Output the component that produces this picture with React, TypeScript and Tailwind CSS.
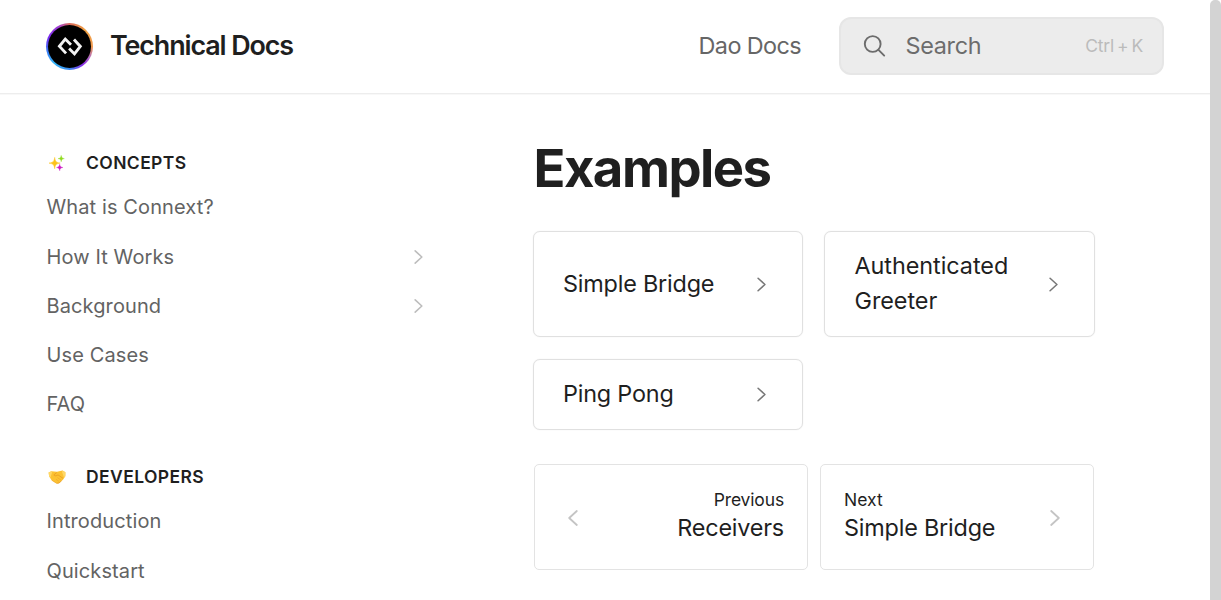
import React from "react";

function Chevron({ className, left = false, w = 1.5 }: { className?: string; left?: boolean; w?: number }) {
  return (
    <svg viewBox="0 0 10 16" fill="none" stroke="currentColor" strokeWidth={w} strokeLinecap="round" strokeLinejoin="round" className={className}>
      <path d={left ? "M8.8 1 1.2 8l7.6 7" : "M1.2 1l7.6 7-7.6 7"} />
    </svg>
  );
}

function Logo() {
  return (
    <div className="mt-px size-[47px] shrink-0 rounded-full bg-[conic-gradient(from_0deg,#d96a5c,#f0a040_12%,#f09a50_25%,#b06ac0_33%,#8a2be8_40%,#3a8af0_50%,#35b5f5_62%,#3a78f5_72%,#7a28f0_82%,#a040d0_92%,#d96a5c)] p-[1.7px]">
      <svg viewBox="0 0 44 44" className="size-full rounded-full bg-black" fill="none" stroke="#f2f2f2" strokeWidth="2.9" strokeLinejoin="miter">
        <path d="M23.2 20 17.4 14.2 11.5 21.4 18.2 28.6" />
        <path d="M26.2 14.6 32.6 21.6 26.7 29.2 21.3 23.8" />
      </svg>
    </div>
  );
}

function Sparkles() {
  return (
    <svg viewBox="0 0 18 18" className="-mt-px size-[18px]">
      <path d="M6.7 3.4C7.3 7.5 8.2 8.4 12.2 9.1 8.2 9.8 7.3 10.7 6.7 14.7 6.1 10.7 5.1 9.8 1 9.1 5.1 8.4 6.1 7.5 6.7 3.4Z" fill="#fcc21b" stroke="#fcc21b" strokeWidth=".5" />
      <path d="M13.2 1.4c.4 2.2.9 2.8 3.1 3.2-2.2.4-2.7.9-3.1 3.1-.4-2.2-.9-2.7-3.1-3.1 2.2-.4 2.7-1 3.1-3.2Z" fill="#8edb1c" stroke="#8edb1c" strokeWidth=".4" />
      <path d="M11.7 10.3c.4 2.2.9 2.8 3.2 3.2-2.3.4-2.8.9-3.2 3.2-.4-2.3-.9-2.8-3.1-3.2 2.2-.4 2.7-1 3.1-3.2Z" fill="#cc1fc4" stroke="#cc1fc4" strokeWidth=".4" />
    </svg>
  );
}

function Handshake() {
  return (
    <svg viewBox="0 0 18 18" className="size-[18px]">
      <path d="M.6 4.4 3.4 3.2 9 3.8 14.5 2.6 17.4 4.2 17.3 8.3 15 11.8 13.4 13 11 15.2 8.6 15.5 3.8 12.4 1.2 8.6Z" fill="#fcc233" />
      <path d="M.6 4.4 3.4 3.2 4.2 4 2.4 9.8 1.2 8.6ZM14.5 2.6 17.4 4.2 17.3 8.3 16 9.6 14 4Z" fill="#ffd766" />
      <path d="M8.8 4.6 5.8 6.9c1 1.4 2.7 1 4.2 0l5 3.4M8.6 15.3 11 15l2.6-2.2" fill="none" stroke="#e79a25" strokeWidth=".8" />
      <path d="M3.8 12.2l4.6 3M9.4 9.6l3.5 2.4M8 11.3l3.2 2.2" fill="none" stroke="#eda52c" strokeWidth=".6" />
    </svg>
  );
}

function Section({ icon, title }: { icon: React.ReactNode; title: string }) {
  return (
    <h2 className="flex h-6 items-center gap-5 pl-[1.5px] text-[17.5px] font-semibold tracking-[0.4px] text-[#1f1f1f]">
      {icon}
      <span>{title}</span>
    </h2>
  );
}

function NavItem({ label, expandable = false }: { label: string; expandable?: boolean }) {
  return (
    <a className="flex h-[49.2px] items-center justify-between text-[20px] tracking-[0.11px] text-[#636363]">
      <span>{label}</span>
      {expandable && <Chevron className="h-[14px] w-[9px] text-[#bdbdbd]" w={1.8} />}
    </a>
  );
}

function Card({ label, className }: { label: string; className: string }) {
  return (
    <a className={`flex items-center justify-between rounded-[7px] border border-[#e0e0e0] pr-[36px] text-[23.4px] leading-[35px] shadow-[0_0_1px_#dcdcdc] ${className}`}>
      <span>{label}</span>
      <Chevron className="mt-[2px] h-[15px] w-[9px] shrink-0 text-[#777]" w={1.7} />
    </a>
  );
}

export default function App() {
  return (
    <div className="flex h-[600px] w-[1221px] overflow-hidden bg-white font-[Inter,sans-serif] text-[#1f1f1f]">
      <div className="flex w-[1210px] shrink-0 flex-col">
        <header className="flex h-[94px] shrink-0 items-center border-b border-[#ededed] pr-[46px] pb-px pl-[46px] shadow-[0_1px_0_#f8f8f8]">
          <Logo />
          <span className="-mt-[3px] ml-[17px] text-[26.9px] leading-8 font-semibold tracking-[-1.12px]">Technical Docs</span>
          <span className="-mt-px ml-auto text-[23.4px] tracking-[-0.6px] text-[#666]">Dao Docs</span>
          <div className="ml-[38px] flex h-[58px] w-[325px] items-center rounded-[12px] border-2 border-[#e6e6e6] bg-[#ececec] pr-[19px] pl-[22px] text-[#6c6c6c]">
            <svg viewBox="0 0 24 24" className="-mt-px size-[24px]" fill="none" stroke="currentColor" strokeWidth="1.9" strokeLinecap="round">
              <circle cx="9.7" cy="10" r="7.9" />
              <path d="m15.5 15.9 5.7 5.7" />
            </svg>
            <span className="ml-[18.5px] text-[23.4px] tracking-[-0.3px]">Search</span>
            <span className="mt-px ml-auto text-[17.5px] tracking-[-0.2px] text-[#bbb] [word-spacing:-1.7px]">Ctrl + K</span>
          </div>
        </header>
        <div className="flex">
          <nav className="ml-[46.5px] w-[376.5px] shrink-0 pt-[57.5px]">
            <Section icon={<Sparkles />} title="CONCEPTS" />
            <div className="pt-[7.4px]">
              <NavItem label="What is Connext?" />
              <NavItem label="How It Works" expandable />
              <NavItem label="Background" expandable />
              <NavItem label="Use Cases" />
              <NavItem label="FAQ" />
            </div>
            <div className="mt-[36.6px]">
              <Section icon={<Handshake />} title="DEVELOPERS" />
            </div>
            <div className="pt-[7.4px]">
              <NavItem label="Introduction" />
              <NavItem label="Quickstart" />
            </div>
          </nav>
          <main className="ml-[110px] w-[563px] pt-[43px]">
            <h1 className="h-[94px] pl-[0.5px] text-[52.6px] font-bold leading-[63px] tracking-[-1.5px]">Examples</h1>
            <div className="grid grid-cols-[270px_271px] gap-x-[21px] gap-y-[22px]">
              <Card label="Simple Bridge" className="h-[106px] pb-px pl-[29px] tracking-[-0.2px]" />
              <Card label="Authenticated Greeter" className="h-[106px] pb-[2px] pl-[29.5px] tracking-[-0.05px]" />
              <Card label="Ping Pong" className="h-[71px] pb-[2px] pl-[29px] tracking-[-0.2px]" />
            </div>
            <div className="mt-[34px] flex gap-3 pl-px">
              <a className="flex h-[106px] w-[274px] items-center justify-between rounded-[5px] border border-[#e3e3e3] pr-[23px] pl-[33px] text-right">
                <Chevron left className="mt-px h-[18px] w-[10px] text-[#c4c4c4]" w={1.8} />
                <span className="flex flex-col pb-px">
                  <span className="text-[17.5px] leading-[22px] tracking-[-0.15px]">Previous</span>
                  <span className="text-[23.4px] leading-[34px] tracking-[-0.2px]">Receivers</span>
                </span>
              </a>
              <a className="flex h-[106px] w-[274px] items-center justify-between rounded-[5px] border border-[#e3e3e3] pr-[33px] pl-[23px]">
                <span className="flex flex-col pb-px">
                  <span className="text-[17.5px] leading-[22px]">Next</span>
                  <span className="text-[23.4px] leading-[34px] tracking-[-0.2px]">Simple Bridge</span>
                </span>
                <Chevron className="mt-px h-[18px] w-[10px] text-[#c4c4c4]" w={1.8} />
              </a>
            </div>
          </main>
        </div>
      </div>
      <div className="w-[11px] shrink-0 rounded-t-[5px] bg-[#d3d3d3]" />
    </div>
  );
}
